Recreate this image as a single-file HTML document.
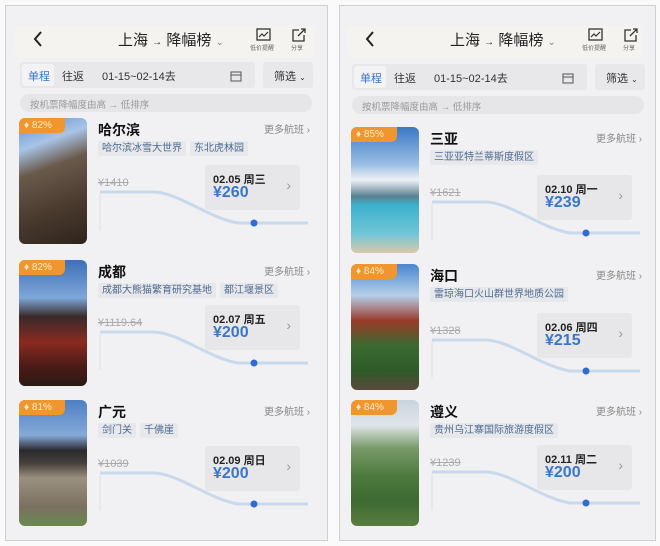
<!DOCTYPE html>
<html><head><meta charset="utf-8"><style>
*{margin:0;padding:0;box-sizing:border-box}
body{width:660px;height:546px;background:#fafafa;font-family:"Liberation Sans","Noto Sans CJK SC",sans-serif;position:relative;overflow:hidden;color:#222}
.p{position:absolute;background:#f1f1f3;border:1px solid #cfcfd2}
.a{position:absolute;white-space:nowrap}
.img{position:absolute;border-radius:6px;overflow:hidden;width:68px;height:126px}
.badge{position:absolute;left:0;top:0;width:46px;height:15px;background:#f0962e;color:#ffe9c8;font-size:10px;line-height:15px;padding-left:5px;border-bottom-right-radius:6px}
.tag{display:inline-block;background:#e6e8ec;color:#4f6a8e;font-size:10px;line-height:15px;padding:0 4px;margin-right:4px;border-radius:2px}
.box{position:absolute;width:95px;height:45px;background:#e7e7ea;border-radius:3px}
.box .d{position:absolute;left:8px;top:6px;font-size:11px;font-weight:bold;color:#222}
.box .pr{position:absolute;left:8px;top:19px;font-size:16px;font-weight:600;color:#3876c8}
.box .ar{position:absolute;right:9px;top:12px;font-size:14px;color:#999}
</style></head><body>
<div class="p" style="left:5px;top:5px;width:323px;height:536px"></div>
<div class="p" style="left:339px;top:5px;width:317px;height:536px"></div>
<div id="root"></div>
<script>
var R=document.getElementById('root'),h='';
function A(x,y,s,st){h+='<div class="a" style="left:'+x+'px;top:'+y+'px;'+(st||'')+'">'+s+'</div>';}
function header(o,by,ty,w){
 h+='<div class="a" style="left:'+(o+15)+'px;top:'+(by-8)+'px;width:'+(w)+'px;height:32px;background:#f4f3ef;border-radius:4px"></div>';
 A(o+32,by-4,'<svg width="12" height="18"><path d="M9 2L3 9l6 7" stroke="#222" stroke-width="2" fill="none"/></svg>');
 A(o+118,by-5,'上海 <span style="font-size:10px">→</span> 降幅榜 <span style="font-size:10px;color:#888">⌄</span>','font-size:15px;color:#222');
 A(o+256,by-6,'<svg width="16" height="14"><rect x="1" y="1" width="13" height="11" fill="none" stroke="#333" stroke-width="1.3"/><path d="M3 9l3-3 2 2 4-4" stroke="#333" fill="none" stroke-width="1.2"/></svg>');
 A(o+250,by+9,'低价提醒','font-size:6px;color:#666');
 A(o+292,by-6,'<svg width="14" height="14"><path d="M7 2H1v11h11V7" fill="none" stroke="#333" stroke-width="1.3"/><path d="M6 8l7-7M9 1h4v4" fill="none" stroke="#333" stroke-width="1.3"/></svg>');
 A(o+291,by+9,'分享','font-size:6px;color:#666');
 h+='<div class="a" style="left:'+(o+20)+'px;top:'+ty+'px;width:235px;height:26px;background:#e8e8eb;border-radius:3px"></div>';
 h+='<div class="a" style="left:'+(o+22)+'px;top:'+(ty+2)+'px;width:32px;height:22px;background:#f3f3f5;border-radius:3px"></div>';
 A(o+28,ty+6,'单程','font-size:11px;color:#3876c8');
 A(o+62,ty+6,'往返','font-size:11px;color:#333');
 A(o+102,ty+6,'01-15~02-14去','font-size:11px;color:#333');
 A(o+230,ty+7,'<svg width="12" height="11"><rect x="1" y="1" width="10" height="9" fill="none" stroke="#555"/><path d="M1 4h10" stroke="#555"/></svg>');
 h+='<div class="a" style="left:'+(o+263)+'px;top:'+ty+'px;width:50px;height:26px;background:#e8e8eb;border-radius:3px"></div>';
 A(o+274,ty+6,'筛选 <span style="font-size:8px">⌄</span>','font-size:11px;color:#333');
 h+='<div class="a" style="left:'+(o+20)+'px;top:'+(ty+32)+'px;width:292px;height:18px;background:#e6e6e9;border-radius:9px"></div>';
 A(o+30,ty+35,'按机票降幅度由高 → 低排序','font-size:9.5px;color:#999');
}
function card(o,y,img,pct,name,tags,old,date,pr,boxy){
 var by=boxy;
 h+='<div class="img" style="left:'+(o+19)+'px;top:'+y+'px;background:'+img+'"><div class="badge">♦ '+pct+'</div></div>';
 A(o+98,y+2,name,'font-size:14px;font-weight:bold;color:#111');
 A(o+264,y+3,'更多航班 ›','font-size:10px;color:#888');
 var t='';tags.forEach(function(x){t+='<span class="tag">'+x+'</span>'});
 A(o+98,y+20,t);
 A(o+98,by+12,old,'font-size:11px;color:#aaa;text-decoration:line-through');
 var ly=by+27;
 h+='<svg class="a" style="left:'+(o+98)+'px;top:'+(ly-2)+'px" width="212" height="45"><path d="M2 2H55C80 2 110 28 140 33H210" fill="none" stroke="#c9d9ec" stroke-width="3"/><line x1="2" y1="4" x2="2" y2="40" stroke="#e0e0e3"/><circle cx="156" cy="33" r="3.5" fill="#2f6bd0"/></svg>';
 h+='<div class="box" style="left:'+(o+205)+'px;top:'+by+'px"><div class="d">'+date+'</div><div class="pr">'+pr+'</div><div class="ar">›</div></div>';
}
var I1='linear-gradient(160deg,#5d8fd0 0%,#a8c4e6 22%,#6a5a4c 40%,#4a3a2e 70%,#2e241c 100%)';
var I2='linear-gradient(180deg,#3d6fb8 0%,#7fa6d8 30%,#3a2a2a 45%,#8a2a22 65%,#4a1a16 85%,#2a1a14 100%)';
var I3='linear-gradient(180deg,#4e7fc4 0%,#86a9d8 28%,#2a2a2e 40%,#45403a 50%,#9a9080 62%,#7a7060 85%,#6a8a50 100%)';
var I4='linear-gradient(180deg,#3a78c6 0%,#9cbfe4 30%,#eef2f6 42%,#5a8090 55%,#3ab0cc 62%,#72c6d8 85%,#d9c8a8 100%)';
var I5='linear-gradient(180deg,#4a86d0 0%,#b6cfe8 25%,#9a3a2a 45%,#3a6a30 65%,#2e5a28 85%,#5a4a3a 100%)';
var I6='linear-gradient(180deg,#c8d4de 0%,#dfe6ea 20%,#7a9a6a 38%,#4e7a3e 60%,#3c6a30 80%,#5a7e40 100%)';
header(0,34,62,300);
card(0,118,I1,'82%','哈尔滨',['哈尔滨冰雪大世界','东北虎林园'],'¥1410','02.05 周三','¥260',165);
card(0,260,I2,'82%','成都',['成都大熊猫繁育研究基地','都江堰景区'],'¥1119.64','02.07 周五','¥200',305);
card(0,400,I3,'81%','广元',['剑门关','千佛崖'],'¥1039','02.09 周日','¥200',446);
var o=332;
header(o,34,64,295);
card(o,127,I4,'85%','三亚',['三亚亚特兰蒂斯度假区'],'¥1621','02.10 周一','¥239',175);
card(o,264,I5,'84%','海口',['雷琼海口火山群世界地质公园'],'¥1328','02.06 周四','¥215',313);
card(o,400,I6,'84%','遵义',['贵州乌江寨国际旅游度假区'],'¥1239','02.11 周二','¥200',445);
R.innerHTML=h;
</script>
</body></html>
